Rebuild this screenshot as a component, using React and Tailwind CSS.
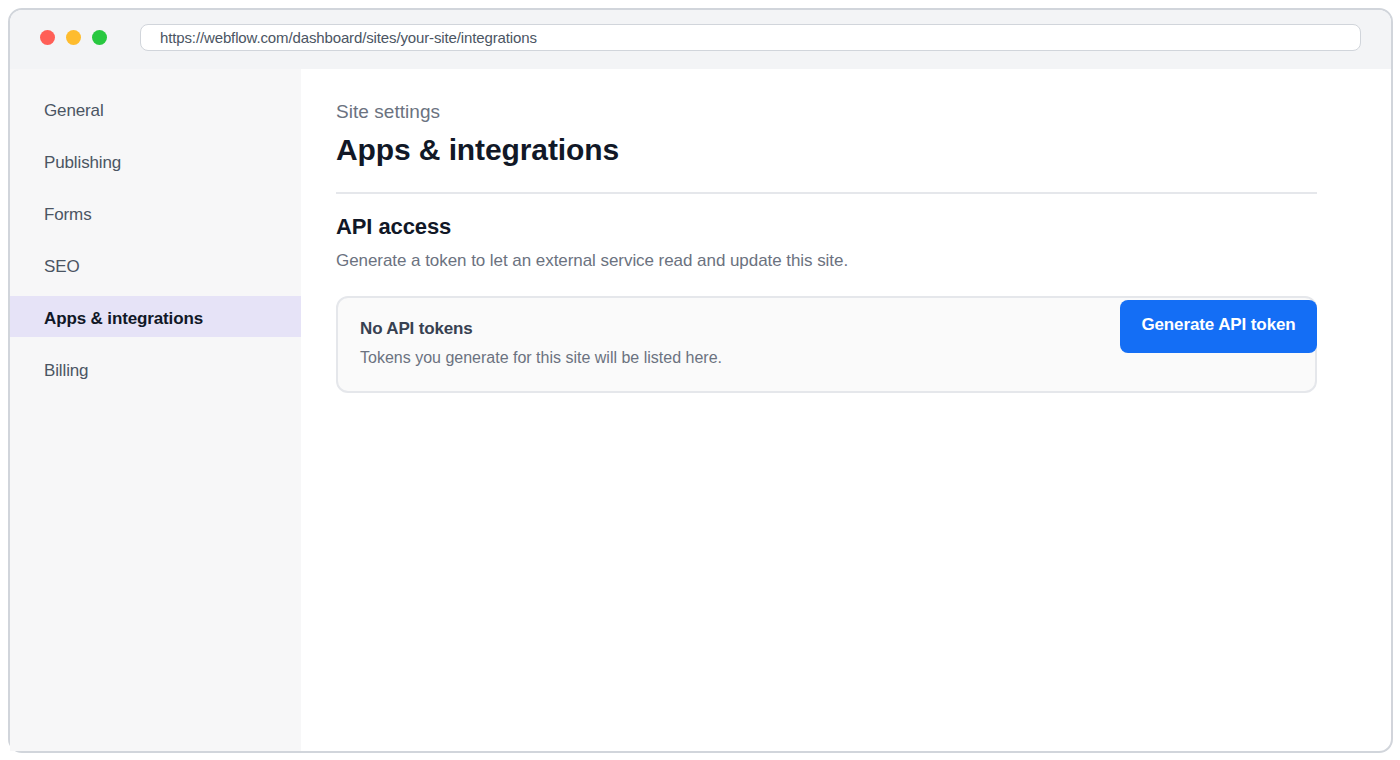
import React from "react";

const NAV_ITEMS = ["General", "Publishing", "Forms", "SEO", "Apps & integrations", "Billing"];

const SideItem = ({ label, active }) => (
  <div
    className={
      active
        ? "h-[41px] mb-[11px] pl-[34px] pt-[5px] flex items-center bg-[#e6e3f7] text-[#111827] font-bold text-[17px] tracking-[-0.13px]"
        : "h-[41px] mb-[11px] pl-[34px] pt-[5px] flex items-center text-[#4b5563] text-[17px] tracking-[-0.13px]"
    }
  >
    {label}
  </div>
);

const App = () => {
  return (
    <div className="w-[1400px] h-[760px] bg-white pl-2 pt-2 font-['Liberation_Sans',Arial,sans-serif]">
      <div className="w-[1385px] h-[745px] border-2 border-[#d1d5db] rounded-[14px] flex flex-col bg-white">
        <div className="h-[59px] shrink-0 bg-[#f3f4f6] rounded-t-[12px] flex items-center pl-[30px] pr-[30px] pb-[4px]">
          <div className="flex gap-[11px]">
            <span className="w-[15px] h-[15px] rounded-full bg-[#ff5f57]" />
            <span className="w-[15px] h-[15px] rounded-full bg-[#febc2e]" />
            <span className="w-[15px] h-[15px] rounded-full bg-[#28c840]" />
          </div>
          <div className="ml-[33px] flex-1 h-[27px] bg-white border border-[#d1d5db] rounded-[8px] pl-[19px] pt-[2px] flex items-center text-[15px] tracking-[-0.13px] text-[#4b5563]">
            https://webflow.com/dashboard/sites/your-site/integrations
          </div>
        </div>
        <div className="flex flex-1 min-h-0">
          <aside className="w-[291px] shrink-0 bg-[#f7f7f8] pt-[19px]">
            {NAV_ITEMS.map((item) => (
              <SideItem key={item} label={item} active={item === "Apps & integrations"} />
            ))}
          </aside>
          <main className="flex-1 pl-[35px] pt-[31px]">
            <div className="w-[981px]">
              <div className="text-[19px] leading-[24px] tracking-[0.05px] text-[#6b7280]">Site settings</div>
              <h1 className="mt-[7px] text-[30px] leading-[38px] tracking-[-0.1px] font-bold text-[#111827]">Apps &amp; integrations</h1>
              <div className="mt-[23px] h-[2px] bg-[#e5e7eb]" />
              <h2 className="mt-[19px] text-[22px] leading-[28px] tracking-[-0.1px] font-bold text-[#111827]">API access</h2>
              <p className="mt-[8px] text-[17px] leading-[24px] tracking-[-0.056px] text-[#6b7280]">
                Generate a token to let an external service read and update this site.
              </p>
              <div className="mt-[23px] h-[97px] border-2 border-[#e5e7eb] rounded-[12px] bg-[#fafafa] flex justify-between items-start pl-[22px]">
                <div className="pt-[20px]">
                  <div className="text-[17px] leading-[22px] tracking-[-0.15px] font-bold text-[#374151]">No API tokens</div>
                  <div className="mt-[7px] text-[16px] leading-[22px] text-[#6b7280]">
                    Tokens you generate for this site will be listed here.
                  </div>
                </div>
                <button className="-mr-[2px] mt-[2px] w-[197px] h-[53px] pb-[4px] rounded-[8px] bg-[#146ef5] text-white text-[17px] tracking-[-0.11px] font-bold">
                  Generate API token
                </button>
              </div>
            </div>
          </main>
        </div>
      </div>
    </div>
  );
};

export default App;
